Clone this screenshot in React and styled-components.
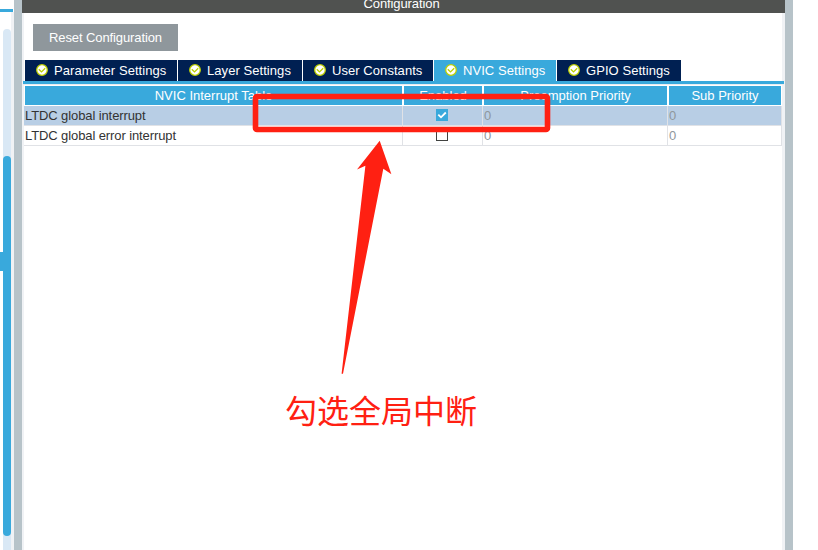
import React from "react";
import styled, { createGlobalStyle } from "styled-components";

const Global = createGlobalStyle`
  * { box-sizing: border-box; }
  body { margin: 0; background: #fff; overflow: hidden; }
`;

const Page = styled.div`
  position: relative;
  display: flex;
  width: 818px;
  height: 550px;
  overflow: hidden;
  font: 13px/20px "Liberation Sans", Arial, sans-serif;
  color: #333;
  white-space: nowrap;
`;

const SidePane = styled.div`
  width: 14px;
  display: flex;
  flex-direction: column;
  padding-top: 9px;
`;

const SideRule = styled.div`
  width: 13px;
  height: 3px;
  flex: none;
  background: #39a9dc;
`;

const SideBody = styled.div`
  flex: 1;
  display: flex;
  border-right: 3px solid #f0f2f5;
`;

const SplitGrip = styled.div`
  width: 3px;
  height: 19px;
  margin-top: 240px;
  background: #39a9dc;
`;

const ScrollTrack = styled.div`
  width: 8px;
  margin-top: 17px;
  padding-top: 127px;
  border-radius: 4px 4px 0 0;
  background: #d9e8f5;
`;

const ScrollThumb = styled.div`
  height: 380px;
  border-radius: 4px;
  background: #39a9dc;
`;

const Divider = styled.div`
  width: 8px;
  background: #b7c3c9;
`;

const Main = styled.main`
  width: 763px;
  display: flex;
  flex-direction: column;
`;

const TitleBar = styled.header`
  height: 13px;
  flex: none;
  display: flex;
  justify-content: center;
  align-items: flex-end;
  background: #505250;
  color: #fff;
  padding-right: 4px;
  letter-spacing: -0.1px;
  span { line-height: 18px; height: 18px; }
`;

const Content = styled.section`
  flex: 1;
  border-left: 2px solid #f0f2f5;
  border-right: 3px solid #f0f2f5;
  padding-top: 11px;
`;

const ResetButton = styled.button`
  display: block;
  width: 145px;
  height: 27px;
  margin: 0 0 9px 9px;
  padding: 0;
  border: 0;
  background: #8f979c;
  color: #fff;
  font: inherit;
  letter-spacing: -0.1px;
`;

const Tabs = styled.nav`
  display: flex;
  gap: 1px;
  padding-left: 1px;
`;

const Tab = styled.div`
  display: flex;
  align-items: center;
  width: ${(p) => p.$width}px;
  height: 21px;
  padding-left: 11px;
  gap: 6px;
  background: ${(p) => (p.$active ? "#39a9dc" : "#002052")};
  color: #fff;
  letter-spacing: 0.06px;

  svg { margin-bottom: 1px; }
`;

const TabRule = styled.div`
  height: 4px;
  margin: 0 -2px 0 -1px;
  border-top: 3px solid #39a9dc;
  background: #e9edf1;
`;

const Table = styled.div`
  width: 758px;
  padding-top: 1px;
`;

const HeadRow = styled.div`
  display: grid;
  grid-template-columns: 377px 78px 183px 112px;
  gap: 2px;
  height: 20px;
  padding-left: 1px;
  padding-bottom: 1px;
`;

const HeadCell = styled.div`
  background: #39a9dc;
  color: #fff;
  text-align: center;
  line-height: 20px;
  height: 19px;
`;

const Row = styled.div`
  display: grid;
  grid-template-columns: 379px 80px 185px 114px;
  height: 20px;
  background: ${(p) => (p.$selected ? "#b8cee5" : "#fff")};
`;

const Cell = styled.div`
  height: 20px;
  line-height: 19px;
  padding-left: 1px;
  border-right: 1px solid #e0e2e6;
  border-bottom: 1px solid #e0e2e6;
  letter-spacing: -0.1px;
  color: ${(p) => (p.$muted ? "#8f979c" : "#333")};
`;

const CheckCell = styled(Cell)`
  display: flex;
  padding: 3px 0 0 33px;
`;

const Check = styled.span`
  width: 12px;
  height: 12px;
  display: flex;
  border: 1px solid ${(p) => (p.$on ? "#39a9dc" : "#404240")};
  background: ${(p) => (p.$on ? "#39a9dc" : "#fff")};
`;

const Markup = styled.svg`
  position: absolute;
  left: 0;
  top: 0;
  pointer-events: none;
`;

const Note = styled.div`
  position: absolute;
  left: 285px;
  top: 386px;
  font: 32px/46px "Noto Sans CJK SC", sans-serif;
  color: #ff2012;
`;

function StatusIcon() {
  return (
    <svg width="12" height="12" viewBox="0 0 12 12">
      <circle cx="6" cy="6" r="5.3" fill="#fff" stroke="#bccf00" strokeWidth="1.3" />
      <path d="M2.8 5.2L5.5 7.9L9.2 4.2" fill="none" stroke="#bccf00" strokeWidth="1.3" />
    </svg>
  );
}

const tabs = [
  ["Parameter Settings", 152],
  ["Layer Settings", 124],
  ["User Constants", 130],
  ["NVIC Settings", 122],
  ["GPIO Settings", 124],
];

const rows = [
  { name: "LTDC global interrupt", on: true },
  { name: "LTDC global error interrupt", on: false },
];

export default function App() {
  return (
    <Page>
      <Global />
      <SidePane>
        <SideRule />
        <SideBody>
          <SplitGrip />
          <ScrollTrack>
            <ScrollThumb />
          </ScrollTrack>
        </SideBody>
      </SidePane>
      <Divider />
      <Main>
        <TitleBar><span>Configuration</span></TitleBar>
        <Content>
          <ResetButton>Reset Configuration</ResetButton>
          <Tabs>
            {tabs.map(([label, width]) => (
              <Tab key={label} $width={width} $active={label === "NVIC Settings"}>
                <StatusIcon />
                {label}
              </Tab>
            ))}
          </Tabs>
          <TabRule />
          <Table>
            <HeadRow>
              <HeadCell>NVIC Interrupt Table</HeadCell>
              <HeadCell>Enabled</HeadCell>
              <HeadCell>Preemption Priority</HeadCell>
              <HeadCell>Sub Priority</HeadCell>
            </HeadRow>
            {rows.map((row) => (
              <Row key={row.name} $selected={row.on}>
                <Cell>{row.name}</Cell>
                <CheckCell>
                  <Check $on={row.on}>
                    {row.on && (
                      <svg width="10" height="10" viewBox="0 0 10 10">
                        <path d="M1.3 4.6L4 7.3L8.8 2.5" fill="none" stroke="#fff" strokeWidth="1.8" />
                      </svg>
                    )}
                  </Check>
                </CheckCell>
                <Cell $muted>0</Cell>
                <Cell $muted>0</Cell>
              </Row>
            ))}
          </Table>
        </Content>
      </Main>
      <Divider />
      <Markup width="818" height="550" viewBox="0 0 818 550">
        <rect x="255.5" y="96.5" width="292" height="33" rx="1.5" fill="none" stroke="#ff2012" strokeWidth="5.6" />
        <path d="M379.7 140.8L391.4 174.2L383.3 168.8L343 373.8H341.6L365.4 165.8L357 169.4Z" fill="#ff2012" />
      </Markup>
      <Note>勾选全局中断</Note>
    </Page>
  );
}
